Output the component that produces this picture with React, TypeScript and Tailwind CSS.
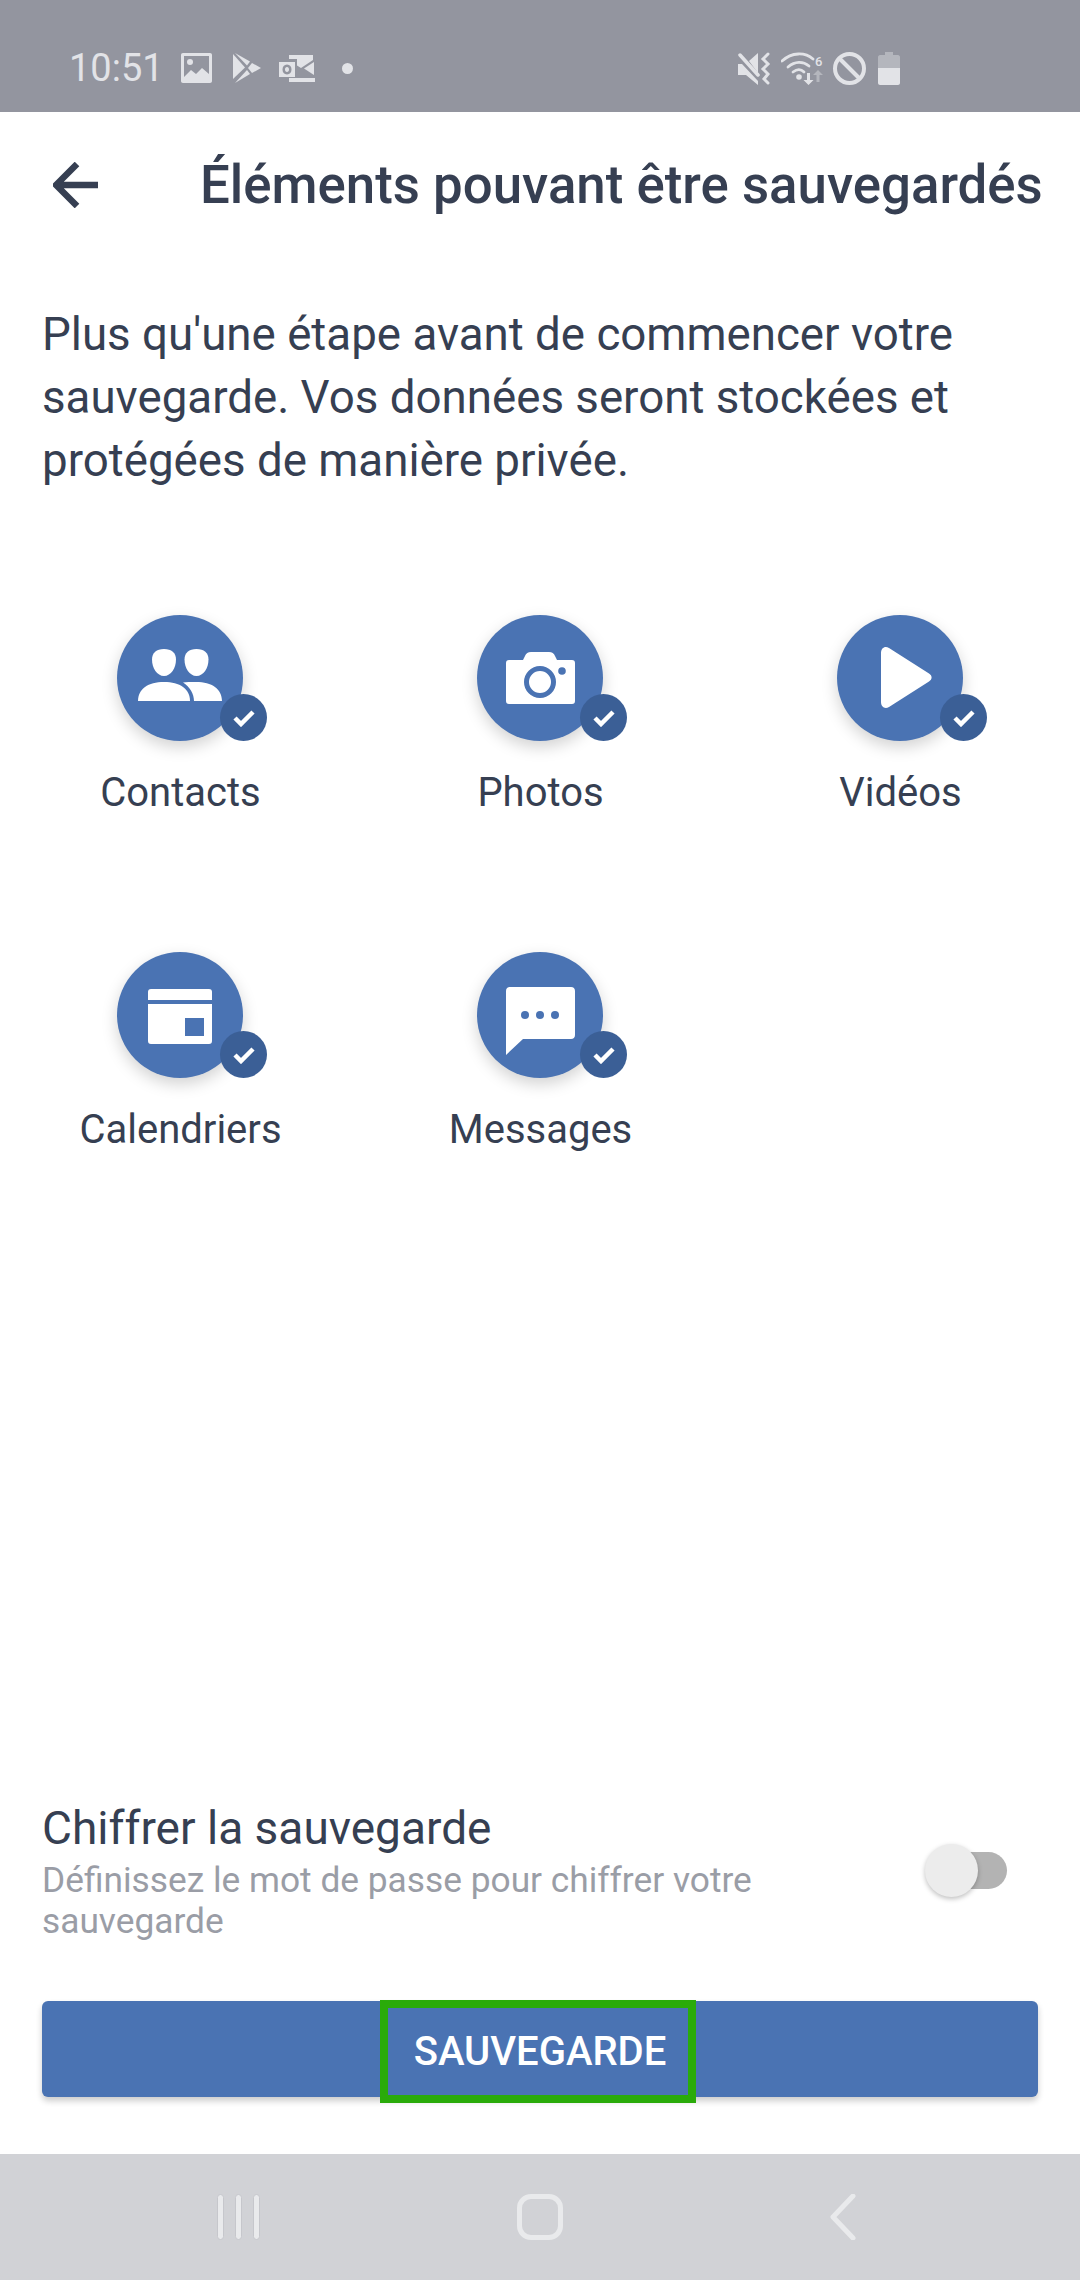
const items = [
  { label: "Contacts", icon: <ContactsIcon /> },
  { label: "Photos", icon: <CameraIcon /> },
  { label: "Vidéos", icon: <VideoIcon /> },
  { label: "Calendriers", icon: <CalendarIcon /> },
  { label: "Messages", icon: <MessageIcon /> },
];

function ContactsIcon() {
  return (
    <svg width="126" height="126" viewBox="0 0 126 126" fill="#fff">
      <path d="M47 34c7.500 0 12 4 12 10.500C59 53 54 61 47 61s-12-8-12-16.500C35 38 39.500 34 47 34Z" />
      <path d="M79.500 34c7.500 0 12 4 12 10.500 0 8.500-5 16.500-12 16.500s-12-8-12-16.500C67.500 38 72 34 79.500 34Z" />
      <path d="M21 86c0-12 10-19 26-19s26 7 26 19Z" />
      <path d="M66 67.500c3-.5 8-.5 13-.5 16 0 26 7 26 19H77c0-7-4-14-11-18.500Z" />
    </svg>
  );
}

function CameraIcon() {
  return (
    <svg width="126" height="126" viewBox="0 0 126 126">
      <path
        fill="#fff"
        d="M32 45h14l2-4c1-2.500 3-4 6-4h18c3 0 5 1.500 6 4l2 4h15c2 0 3 1 3 3v38c0 2-1 3-3 3H32c-2 0-3-1-3-3V48c0-2 1-3 3-3Z"
      />
      <ellipse cx="63" cy="67" rx="13.500" ry="13.500" fill="none" stroke="#4a73b3" strokeWidth="5" />
      <circle cx="85" cy="56" r="3.800" fill="#4a73b3" />
    </svg>
  );
}

function VideoIcon() {
  return (
    <svg width="126" height="126" viewBox="0 0 126 126">
      <path fill="#fff" d="M44 38c0-5 4-7.500 8-5l40 25.500c3.500 2.200 3.500 5.800 0 8L52 92c-4 2.500-8 0-8-5Z" />
    </svg>
  );
}

function CalendarIcon() {
  return (
    <svg width="126" height="126" viewBox="0 0 126 126" fill="#fff">
      <path d="M34 37h58c2 0 3 1 3 3v8H31v-8c0-2 1-3 3-3Z" />
      <path fillRule="evenodd" d="M31 52h64v37c0 2-1 3-3 3H34c-2 0-3-1-3-3Zm37 14v18h19V66Z" />
    </svg>
  );
}

function MessageIcon() {
  return (
    <svg width="126" height="126" viewBox="0 0 126 126">
      <path fill="#fff" d="M33 35h61c2.500 0 4 1.500 4 4v44c0 2.500-1.500 4-4 4H46l-17 16V39c0-2.500 1.500-4 4-4Z" />
      <circle cx="48" cy="63" r="4" fill="#4a73b3" />
      <circle cx="63" cy="63" r="4" fill="#4a73b3" />
      <circle cx="78" cy="63" r="4" fill="#4a73b3" />
    </svg>
  );
}

function StatusLeftIcons() {
  return (
    <div className="flex items-center text-[#e2e3e7]">
      {/* gallery */}
      <svg width="31" height="30" viewBox="0 0 31 30" className="ml-[17px]">
        <path
          fill="#e2e3e7"
          fillRule="evenodd"
          d="M2 0h27c1.200 0 2 .8 2 2v26c0 1.200-.8 2-2 2H2c-1.200 0-2-.8-2-2V2C0 .8.800 0 2 0Zm1 3v21l7-7 5 4 6-6 7 6V3Z"
        />
        <circle cx="9" cy="9" r="3" fill="#e2e3e7" />
      </svg>
      {/* play store */}
      <svg width="28" height="31" viewBox="0 0 28 31" className="ml-[21px]">
        <path fill="#e2e3e7" d="M0 1l12 13.500L0 26Z" />
        <path fill="#e2e3e7" d="M2 0l15 8.500-3 4Z" />
        <path fill="#e2e3e7" d="M2 30l15-9-3-4Z" />
        <path fill="#e2e3e7" d="M19 10l9 5-9 5-4-5Z" />
      </svg>
      {/* outlook */}
      <svg width="36" height="27" viewBox="0 0 36 27" className="ml-[18px]">
        <path fill="#e2e3e7" d="M10 0h24v5L22 13l-4-2.500V4H10Z" />
        <path fill="#e2e3e7" d="M35 7v13l-10-6.500Z" />
        <path fill="#e2e3e7" d="M10 23h26v4H10Z" />
        <path fill="#e2e3e7" fillRule="evenodd" d="M0 7h16v15H0Zm8 2.500c-3 0-4.500 2.200-4.500 5s1.500 5 4.500 5 4.500-2.200 4.500-5-1.500-5-4.500-5Zm0 2.500c1.300 0 2 1 2 2.500S9.300 17 8 17s-2-1-2-2.500.7-2.500 2-2.500Z" />
      </svg>
      <div className="ml-[27px] w-[11px] h-[11px] rounded-full bg-[#e2e3e7]" />
    </div>
  );
}

function StatusRightIcons() {
  return (
    <div className="flex items-center">
      {/* mute + vibrate */}
      <svg width="33" height="33" viewBox="0 0 33 33">
        <path fill="#e2e3e7" d="M0 12h4l16 17v4L8 23H0Z" />
        <path fill="#e2e3e7" d="M11 9l9-8v20Z" />
        <path stroke="#e2e3e7" strokeWidth="3.500" strokeLinecap="round" d="M2 3l18 20" fill="none" />
        <path stroke="#e2e3e7" strokeWidth="3" strokeLinecap="round" fill="none" d="M30 2l-5 5 5 5-5 5 5 5-4 5 4 4" />
      </svg>
      {/* wifi */}
      <svg width="44" height="33" viewBox="0 0 44 33" className="ml-[10px]">
        <g fill="none" stroke="#e2e3e7" strokeWidth="2.800" strokeLinecap="round">
          <path d="M1 9c10-9 23-9 31-2" />
          <path d="M7 15c7-6 15-6 21-1" />
          <path d="M12 20c4-3 8-3 11 0" />
        </g>
        <circle cx="18" cy="25" r="2.800" fill="#e2e3e7" />
        <text x="34" y="14" fontSize="13" fontFamily="Roboto, sans-serif" fontWeight="500" fill="#e2e3e7">6</text>
        <path fill="#e2e3e7" d="M26 21h3v7h3.500l-5 5-5-5H26Z" />
        <path fill="#b4b6bd" d="M37 18l5 5h-3.500v7h-3v-7H32Z" />
      </svg>
      {/* do not disturb */}
      <svg width="33" height="33" viewBox="0 0 33 33" className="ml-[8px]">
        <circle cx="16.500" cy="16.500" r="14.500" fill="none" stroke="#e2e3e7" strokeWidth="4" />
        <path d="M6 6l21 21" stroke="#e2e3e7" strokeWidth="4" />
      </svg>
      {/* battery */}
      <svg width="22" height="33" viewBox="0 0 22 33" className="ml-[12px]">
        <path fill="#b4b6bd" d="M7 0h8v3h5c1 0 2 1 2 2v11H0V5c0-1 1-2 2-2h5Z" />
        <path fill="#e2e3e7" d="M0 16h22v15c0 1-1 2-2 2H2c-1 0-2-1-2-2Z" />
      </svg>
    </div>
  );
}

function NavBar() {
  return (
    <div className="h-[126px] bg-[#d1d2d6] flex items-center">
      <div className="w-1/3 flex justify-center">
        <div className="flex gap-[11px] ml-[116px]">
          {[0, 1, 2].map((i) => (
            <div key={i} className="w-[7px] h-[46px] rounded-full bg-[#e9eaec] border border-[#c6c7cc]" />
          ))}
        </div>
      </div>
      <div className="w-1/3 flex justify-center">
        <div className="w-[46px] h-[46px] rounded-[14px] border-[5px] border-[#e9eaec]" />
      </div>
      <div className="w-1/3 flex justify-center">
        <svg width="26" height="46" viewBox="0 0 26 46" className="mr-[114px]">
          <path d="M23 2 3 23l20 21" fill="none" stroke="#e9eaec" strokeWidth="5" strokeLinecap="round" strokeLinejoin="round" />
        </svg>
      </div>
    </div>
  );
}

export default function App() {
  return (
    <div className="w-[1080px] h-[2280px] bg-white flex flex-col overflow-hidden font-['Roboto',sans-serif] text-[#363f52]">
      {/* Status bar */}
      <div className="h-[112px] bg-[#93959f] flex items-center justify-between pl-[69px] pr-[180px] pt-[24px] shrink-0">
        <div className="flex items-center">
          <span className="text-[38px] leading-[40px] text-[#e2e3e7]">10:51</span>
          <StatusLeftIcons />
        </div>
        <StatusRightIcons />
      </div>

      {/* Header */}
      <div className="h-[146px] flex items-center pl-[53px] shrink-0">
        <svg width="46" height="46" viewBox="0 0 46 46">
          <path d="M45 23H5M24 2 3 23l21 21" fill="none" stroke="#363f52" strokeWidth="6.500" />
        </svg>
        <h1 className="ml-[101px] text-[52.800px] leading-[60px] font-medium whitespace-nowrap">
          Éléments pouvant être sauvegardés
        </h1>
      </div>

      {/* Intro */}
      <p className="px-[42px] mt-[45px] text-[45.700px] leading-[63px]">
        Plus qu'une étape avant de commencer votre sauvegarde. Vos données seront stockées et protégées de manière privée.
      </p>

      {/* Backup items */}
      <div className="grid grid-cols-3 auto-rows-[337px] mt-[123px]">
        {items.map((item) => (
          <div key={item.label} className="flex flex-col items-center">
            <div className="relative w-[126px] h-[126px] rounded-full bg-[#4a73b3] shadow-[0_6px_16px_rgba(0,0,0,0.18)]">
              {item.icon}
              <div className="absolute left-[103px] top-[79px] w-[47px] h-[47px] rounded-full bg-[#3b5f96] flex items-center justify-center">
                <svg width="24" height="18" viewBox="0 0 24 18">
                  <path d="M3 9l6 6L21 3" fill="none" stroke="#fff" strokeWidth="4.500" />
                </svg>
              </div>
            </div>
            <span className="mt-[28px] ml-[1px] text-[40px] leading-[48px]">{item.label}</span>
          </div>
        ))}
      </div>

      <div className="flex-1" />

      {/* Encrypt option */}
      <div className="flex items-center justify-between pl-[42px] pr-[73px]">
        <div className="w-[800px] mb-[3px]">
          <div className="text-[46px] leading-[52px]">Chiffrer la sauvegarde</div>
          <div className="mt-[6px] text-[35.300px] leading-[41px] text-[#9a9da6]">
            Définissez le mot de passe pour chiffrer votre sauvegarde
          </div>
        </div>
        <div className="relative w-[82px] h-[53px] flex items-center justify-end -mt-[6px]">
          <div className="w-[62px] h-[37px] rounded-full bg-[#b3b3b3]" />
          <div className="absolute left-0 top-0 w-[53px] h-[53px] rounded-full bg-[#ececec] shadow-[0_2px_5px_rgba(0,0,0,0.25)]" />
        </div>
      </div>

      {/* Save button */}
      <div className="relative mx-[42px] mt-[56px] mb-[57px] h-[96px] rounded-[6px] bg-[#4a73b3] shadow-[0_4px_6px_rgba(0,0,0,0.2)] flex items-center justify-center pt-[5px]">
        <span className="text-[40px] leading-[44px] font-medium text-white">SAUVEGARDE</span>
        <div className="absolute left-[338px] top-[-1px] w-[316px] h-[103px] border-[8px] border-[#2aab0a]" />
      </div>

      <NavBar />
    </div>
  );
}
